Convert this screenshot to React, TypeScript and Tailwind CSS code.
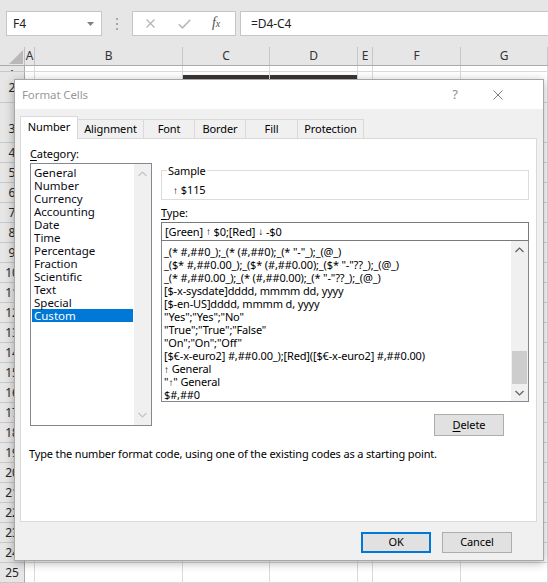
import React from "react";

const colW = ["w-[10px]", "w-[148px]", "w-[87px]", "w-[88px]", "w-[15px]", "w-[88px]", "w-[87px]"];
const colL = ["A", "B", "C", "D", "E", "F", "G"];

const categories = [
  "General",
  "Number",
  "Currency",
  "Accounting",
  "Date",
  "Time",
  "Percentage",
  "Fraction",
  "Scientific",
  "Text",
  "Special",
  "Custom",
];

// small narrow arrow like Segoe UI draws it
const Arr = ({ c }: { c: string }) => (
  <span className="inline-block w-[5px] text-center font-['Liberation_Sans',sans-serif] text-[10px] leading-[10px] overflow-visible">
    {c}
  </span>
);

const formats: React.ReactNode[] = [
  '_(* #,##0_);_(* (#,##0);_(* "-"_);_(@_)',
  '_($* #,##0.00_);_($* (#,##0.00);_($* "-"??_);_(@_)',
  '_(* #,##0.00_);_(* (#,##0.00);_(* "-"??_);_(@_)',
  "[$-x-sysdate]dddd, mmmm dd, yyyy",
  "[$-en-US]dddd, mmmm d, yyyy",
  '"Yes";"Yes";"No"',
  '"True";"True";"False"',
  '"On";"On";"Off"',
  "[$€-x-euro2] #,##0.00_);[Red]([$€-x-euro2] #,##0.00)",
  <>
    <Arr c="↑" /> General
  </>,
  <>
    "<Arr c="↑" />" General
  </>,
  "$#,##0",
];

const Chevron = ({ up, color }: { up?: boolean; color: string }) => (
  <svg width="9" height="6" viewBox="0 0 9 6">
    <path d={up ? "M0.5 5 L4.5 1 L8.5 5" : "M0.5 1 L4.5 5 L8.5 1"} fill="none" stroke={color} strokeWidth="1.2" />
  </svg>
);

const TopBar = () => (
  <div className="h-[47px] bg-[#e6e6e6] flex items-start pt-[11px] pl-[6px]">
    <div className="w-[96px] h-[25px] bg-white border border-[#c6c6c6] flex items-center pl-[6px] pr-[7px] text-[12px] text-[#222]">
      <span className="flex-1">F4</span>
      <svg width="7" height="4" viewBox="0 0 7 4">
        <path d="M0 0h7L3.5 4z" fill="#808080" />
      </svg>
    </div>
    <div className="w-[30px] h-[25px] flex flex-col items-center justify-center gap-[3px]">
      <span className="w-[2px] h-[2px] bg-[#a8a8a8]" />
      <span className="w-[2px] h-[2px] bg-[#a8a8a8]" />
      <span className="w-[2px] h-[2px] bg-[#a8a8a8]" />
    </div>
    <div className="w-[104px] h-[25px] bg-white border border-[#c6c6c6] flex items-center pl-[13px]">
      <svg width="9" height="9" viewBox="0 0 9 9">
        <path d="M0.5 0.5L8.5 8.5M8.5 0.5L0.5 8.5" stroke="#b3b3b3" strokeWidth="1.2" />
      </svg>
      <svg className="ml-[23px]" width="13" height="10" viewBox="0 0 13 10">
        <path d="M0.8 5.2L4.5 8.8L12.3 0.8" fill="none" stroke="#b8b8b8" strokeWidth="1.6" />
      </svg>
      <span className="ml-[21px] font-['Liberation_Serif',serif] italic text-[14px] leading-[14px] text-[#505050]">
        f<span className="text-[10px]">x</span>
      </span>
    </div>
    <div className="ml-[4px] flex-1 h-[25px] bg-white border border-r-0 border-[#c6c6c6] flex items-center pl-[10px] text-[12px] text-[#222]">
      =D4-C4
    </div>
  </div>
);

const HeaderRow = () => (
  <div className="flex h-[19px] bg-[#e6e6e6] border-b border-[#ababab]">
    <div className="w-[25px] shrink-0 flex items-end justify-end pr-[1px] pb-[1px] border-r border-[#c0c0c0]">
      <svg width="14" height="14" viewBox="0 0 14 14">
        <polygon points="14,0 14,14 0,14" fill="#b9b9b9" />
      </svg>
    </div>
    {colL.map((l, i) => (
      <div
        key={l}
        className={`${colW[i]} shrink-0 flex items-center justify-center border-r border-[#c6c6c6] text-[12px] text-[#333]`}
      >
        {l}
      </div>
    ))}
  </div>
);

const GridRow = ({
  n,
  h,
  align,
  mark,
}: {
  n: number;
  h: string;
  align: string;
  mark?: boolean;
}) => (
  <div className={`flex ${h}`}>
    <div
      className={`w-[25px] shrink-0 overflow-hidden flex justify-center ${align} bg-[#e6e6e6] border-r border-r-[#ababab] border-b border-b-[#c8c8c8] text-[12px] leading-[15px] text-[#262626]`}
    >
      {n}
    </div>
    {colW.map((w, i) => (
      <div key={i} className={`${w} shrink-0 bg-white border-r border-b border-[#dadada]`}>
        {mark && (i === 2 || i === 3) && <div className="mt-[3px] h-[5px] bg-[#3a3633]" />}
      </div>
    ))}
  </div>
);

const Grid = () => {
  const rows = [];
  for (let n = 4; n <= 25; n++) rows.push(<GridRow key={n} n={n} h="h-[20px]" align="items-center" />);
  return (
    <div>
      <GridRow n={1} h="h-[6px]" align="items-start pt-[1px]" />
      <GridRow n={2} h="h-[31px]" align="items-center" mark />
      <GridRow n={3} h="h-[40px]" align="items-end pb-[6px]" />
      {rows}
    </div>
  );
};

const tabs = [
  { t: "Alignment", w: "w-[66px]" },
  { t: "Font", w: "w-[51px]" },
  { t: "Border", w: "w-[51px]" },
  { t: "Fill", w: "w-[52px]" },
  { t: "Protection", w: "w-[66px]" },
];

const Dialog = () => (
  <div className="absolute left-[14px] top-[79px] w-[530px] h-[482px] flex flex-col border border-[#a8a8a8] bg-[#f0f0f0] shadow-[0_2px_9px_rgba(0,0,0,0.3)]">
    <div className="h-[29px] shrink-0 bg-white flex items-center pl-[7px] pr-[40px]">
      <span className="flex-1 text-[#999999] text-[11.5px] leading-[15px]">Format Cells</span>
      <span className="w-[10px] text-center text-[#8f8f8f] text-[13px]">?</span>
      <svg className="ml-[33px]" width="10" height="10" viewBox="0 0 10 10">
        <path d="M0.5 0.5L9.5 9.5M9.5 0.5L0.5 9.5" stroke="#7d7d7d" strokeWidth="1" />
      </svg>
    </div>

    <div className="flex-1 flex flex-col px-[5px] pt-[7px]">
      <div className="flex items-end h-[22px]">
        <div className="relative z-10 w-[58px] h-[23px] -mb-px bg-white border border-b-0 border-[#d9d9d9] flex items-center justify-center pb-[2px]">
          Number
        </div>
        {tabs.map((tab) => (
          <div
            key={tab.t}
            className={`${tab.w} h-[19px] bg-[#f0f0f0] border border-b-0 border-l-0 border-[#d9d9d9] flex items-center justify-center`}
          >
            {tab.t}
          </div>
        ))}
      </div>

      <div className="w-[517px] h-[384px] bg-white border border-[#d9d9d9] pl-[9px] pr-[7px] pt-[7px]">
        <div className="flex">
          <div className="w-[122px] shrink-0">
            <div className="h-[17px] leading-[15px]">
              <span className="underline underline-offset-2">C</span>ategory:
            </div>
            <div className="h-[263px] border border-[#828790] flex">
              <div className="flex-1 pt-[2px] text-[11.5px] tracking-normal">
                {categories.map((c) =>
                  c === "Custom" ? (
                    <div key={c} className="mx-[1px] pl-[2px] leading-[13px] bg-[#0078d7] text-white">
                      {c}
                    </div>
                  ) : (
                    <div key={c} className="pl-[3px] leading-[13px] text-[#0a0a14]">
                      {c}
                    </div>
                  )
                )}
              </div>
              <div className="w-[17px] bg-[#f0f0f0] flex flex-col items-center justify-between py-[7px]">
                <Chevron up color="#c4c4c4" />
                <Chevron color="#c4c4c4" />
              </div>
            </div>
          </div>

          <div className="ml-[9px] w-[368px] shrink-0 pt-[17px]">
            <fieldset className="border border-[#dcdcdc] px-[5px] pb-[2px]">
              <legend className="px-[1px] leading-[15px]">Sample</legend>
              <div className="pl-[6px] pt-[4px] leading-[15px]">
                <Arr c="↑" /> $115
              </div>
            </fieldset>
            <div className="mt-[5px] leading-[15px]">
              <span className="underline underline-offset-2">T</span>ype:
            </div>
            <div className="mt-[2px] h-[19px] border border-[#7a7a7a] pl-[3px] flex items-center leading-[15px] whitespace-pre">
              [Green] <Arr c="↑" /> $0;[Red] <Arr c="↓" /> -$0
            </div>
            <div className="h-[161px] border border-t-0 border-[#828790] flex">
              <div className="flex-1 pl-[2px] pt-[4px] whitespace-nowrap overflow-hidden tracking-[-0.15px]">
                {formats.map((f, i) => (
                  <div key={i} className="leading-[13px]">
                    {f}
                  </div>
                ))}
              </div>
              <div className="w-[17px] bg-[#f0f0f0] flex flex-col">
                <div className="h-[17px] flex items-center justify-center">
                  <Chevron up color="#606060" />
                </div>
                <div className="flex-1 flex flex-col px-[1px]">
                  <div className="mt-auto h-[33px] bg-[#cdcdcd]" />
                </div>
                <div className="h-[17px] flex items-center justify-center">
                  <Chevron color="#606060" />
                </div>
              </div>
            </div>
            <div className="flex justify-end pr-[25px] mt-[12px]">
              <div className="w-[70px] h-[22px] bg-[#e1e1e1] border border-[#adadad] flex items-center justify-center">
                <span>
                  <span className="underline underline-offset-2">D</span>elete
                </span>
              </div>
            </div>
          </div>
        </div>
        <p className="-ml-px mt-[10px] leading-[15px] tracking-[-0.15px]">
          Type the number format code, using one of the existing codes as a starting point.
        </p>
      </div>

      <div className="mt-[10px] flex justify-end gap-[11px] pr-[26px]">
        <div className="w-[70px] h-[21px] bg-[#e1e1e1] border-2 border-[#0078d7] flex items-center justify-center">
          OK
        </div>
        <div className="w-[70px] h-[21px] bg-[#e1e1e1] border border-[#adadad] flex items-center justify-center">
          Cancel
        </div>
      </div>
    </div>
  </div>
);

export default function App() {
  return (
    <div className="relative w-[548px] h-[583px] overflow-hidden bg-white font-['Noto_Sans',sans-serif] text-[11px] tracking-[-0.1px] text-black">
      <TopBar />
      <HeaderRow />
      <Grid />
      <Dialog />
    </div>
  );
}
